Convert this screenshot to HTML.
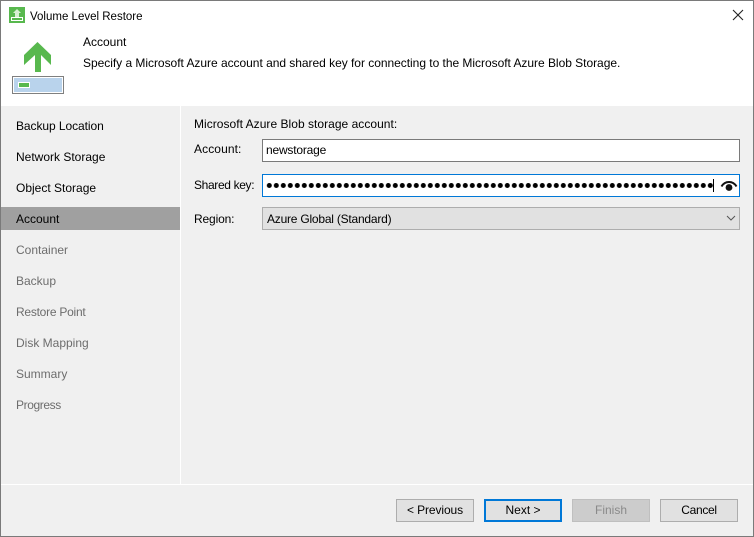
<!DOCTYPE html>
<html><head><meta charset="utf-8"><style>
html,body{margin:0;padding:0}
body{width:754px;height:537px;position:relative;overflow:hidden;background:#f0f0f0;font:12px "Liberation Sans",sans-serif;color:#000}
div{position:absolute;box-sizing:border-box}
.t{white-space:nowrap;line-height:16px;height:16px}
.g{color:#6d6d6d}
.in{left:262px;width:478px;height:23px;border:1px solid #7a7a7a;background:#fff}
.b{top:499px;width:78px;height:23px;border:1px solid #adadad;background:#e1e1e1;text-align:center;line-height:21px}
</style></head><body>
<div style="left:0;top:0;width:754px;height:106px;background:#fff"></div>
<svg style="position:absolute;left:9px;top:7px" width="16" height="16" viewBox="0 0 16 16"><rect width="16" height="16" fill="#58b84e"/><path d="M8 2 L12 6 L10 6 L10 10 L6 10 L6 6 L4 6Z" fill="#d8f0d4"/><rect x="2.5" y="10.5" width="11" height="3" fill="#58b84e" stroke="#fff"/></svg>
<div class="t" style="left:30px;top:8.5px;font-size:11.5px">Volume Level Restore</div>
<svg style="position:absolute;left:731px;top:7px" width="14" height="14" viewBox="0 0 14 14"><path d="M2 3 L12 13 M12 3 L2 13" stroke="#222" stroke-width="1.1" fill="none"/></svg>
<svg style="position:absolute;left:12px;top:40px" width="54" height="56" viewBox="0 0 54 56"><path d="M25.5 2 L39 15 V25 L29 15 V32 H23 V15 L12 25 V15Z" fill="#58b84e"/><rect x="0.5" y="36.5" width="51" height="17" fill="#b9d3ec" stroke="#7f7f7f"/><rect x="1.5" y="37.5" width="49" height="15" fill="none" stroke="#fff"/><rect x="6.5" y="42.5" width="11" height="5" fill="#58b84e" stroke="#fff"/></svg>
<div class="t" style="left:83px;top:34px">Account</div>
<div class="t" style="left:83px;top:55px;letter-spacing:-.03px">Specify a Microsoft Azure account and shared key for connecting to the Microsoft Azure Blob Storage.</div>

<div style="left:180px;top:106px;width:1px;height:378px;background:#fff"></div>
<div style="left:1px;top:484px;width:752px;height:1px;background:#fff"></div>
<div style="left:1px;top:207px;width:179px;height:23px;background:#a0a0a0"></div>
<div class="t" style="left:16px;top:118px;letter-spacing:-.07px">Backup Location</div>
<div class="t" style="left:16px;top:149px">Network Storage</div>
<div class="t" style="left:16px;top:180px">Object Storage</div>
<div class="t" style="left:16px;top:211px">Account</div>
<div class="t g" style="left:16px;top:242px">Container</div>
<div class="t g" style="left:16px;top:273px">Backup</div>
<div class="t g" style="left:16px;top:304px;letter-spacing:-.25px">Restore Point</div>
<div class="t g" style="left:16px;top:335px">Disk Mapping</div>
<div class="t g" style="left:16px;top:366px">Summary</div>
<div class="t g" style="left:16px;top:397px;letter-spacing:-.4px">Progress</div>

<div class="t" style="left:194px;top:116px;letter-spacing:.03px">Microsoft Azure Blob storage account:</div>
<div class="t" style="left:194px;top:141px;letter-spacing:.1px">Account:</div>
<div class="t" style="left:194px;top:176.5px;letter-spacing:-.35px">Shared key:</div>
<div class="t" style="left:194px;top:211px;letter-spacing:-.15px">Region:</div>
<div class="in"  style="top:139px"></div>
<div class="t" style="left:266px;top:142px;letter-spacing:-.2px">newstorage</div>
<div class="in" style="top:174px;border-color:#0078d7"></div>
<svg style="position:absolute;left:266px;top:180px" width="450" height="12"><defs><pattern id="p" x="0.3" width="7" height="12" patternUnits="userSpaceOnUse"><circle cx="3" cy="5.5" r="2.5" fill="#000"/></pattern></defs><rect width="448" height="12" fill="url(#p)"/></svg>
<div style="left:713px;top:179px;width:1px;height:13px;background:#000"></div>
<svg style="position:absolute;left:720px;top:179px" width="18" height="14" viewBox="0 0 18 14"><path d="M1.5 7.5 C5 1.5 13 1.5 16.5 7.5" stroke="#111" stroke-width="2" fill="none"/><circle cx="9" cy="8.5" r="3.4" fill="#111"/></svg>
<div class="in" style="top:207px;border-color:#adadad;background:#e1e1e1"></div>
<div class="t" style="left:267px;top:211px;letter-spacing:-.22px">Azure Global (Standard)</div>
<svg style="position:absolute;left:726px;top:214px" width="10" height="9"><path d="M1 2 L5 6 L9 2" stroke="#555" fill="none"/></svg>

<div class="b" style="left:396px;letter-spacing:-.1px">&lt; Previous</div>
<div class="b" style="left:484px;border:2px solid #0078d7;line-height:19px">Next &gt;</div>
<div class="b" style="left:572px;background:#ccc;color:#8a8a8a;border-color:#bfbfbf">Finish</div>
<div class="b" style="left:660px;letter-spacing:-.3px">Cancel</div>
<div style="left:0;top:0;width:754px;height:537px;border:1px solid #7a7a7a"></div>
</body></html>
